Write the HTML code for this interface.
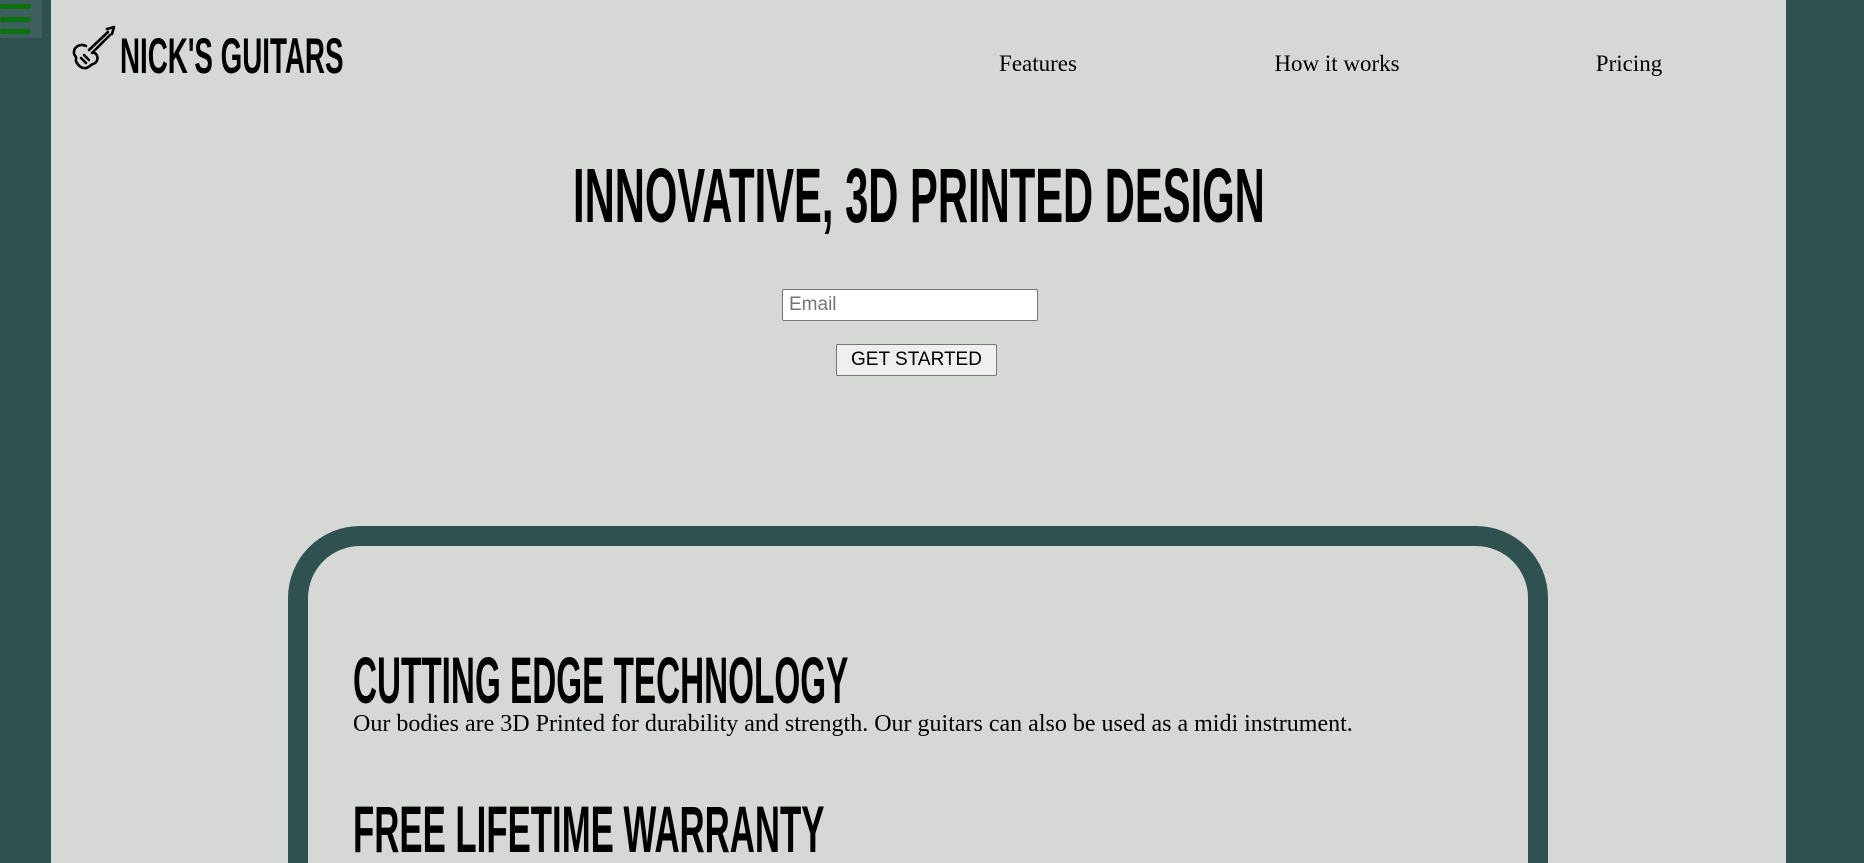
<!DOCTYPE html>
<html style="overflow:hidden;height:863px"><head><meta charset="utf-8"><style>
html,body{margin:0;padding:0}
body{width:1864px;height:863px;overflow:hidden;background:#2f5150;position:relative;font-family:"Liberation Serif",serif}
.wrap{position:absolute;left:0;top:0;width:1864px;height:863px;overflow:hidden}
.main{position:absolute;left:51px;top:0;width:1735px;height:863px;background:#d6d8d5}
.ham{position:absolute;left:0;top:0;width:42px;height:38px;background:#3f5f5e}
.ham i{position:absolute;left:0;width:31px;height:5px;border-radius:3px;background:#0a720a}
.cond{position:absolute;font-family:"Liberation Sans",sans-serif;font-weight:bold;color:#000;transform-origin:0 0;white-space:nowrap;line-height:1}
.nav{position:absolute;top:51px;font-size:23px;color:#000;transform:translateX(-50%);line-height:1.1}
.card{position:absolute;left:288px;top:526px;width:1220px;height:317px;border:20px solid #2f5150;border-bottom:0;border-radius:72px 72px 0 0;background:#d6d8d5}
</style></head><body><div class="wrap">
<div class="main"></div>
<div class="ham"><i style="top:4px"></i><i style="top:17px"></i><i style="top:29px"></i></div>
<svg style="position:absolute;left:71px;top:25px" width="46" height="46" viewBox="0 0 46 46" fill="none" stroke="#000" stroke-width="2.6" stroke-linejoin="round" stroke-linecap="round">
<path d="M15 21 C9 18 3 22 3 27 C2 30 6 31 5 34 C4 37 9 43 13 43 C17 44 19 40 22 39 C26 38 28 33 25 29 L22 27"/>
<path d="M18 25 L37 7 M21 28 L39 10"/>
<path d="M36 4 L43 2 L41 9"/>
<path d="M13 30 L18 35 M10 33 L15 38"/>
</svg>
<div class="card"></div>
<div class="cond" style="left:120px;top:31px;font-size:50px;transform:scaleX(0.555)">NICK'S GUITARS</div>
<div class="nav" style="left:1038px">Features</div>
<div class="nav" style="left:1337px">How it works</div>
<div class="nav" style="left:1629px">Pricing</div>
<div class="cond" style="left:573px;top:158px;font-size:77px;transform:scaleX(0.542)">INNOVATIVE, 3D PRINTED DESIGN</div>
<div style="position:absolute;left:782px;top:289px;width:256px;height:32px;box-sizing:border-box;border:1px solid #767676;border-radius:2px;background:#fff;font:19px 'Liberation Sans',sans-serif;color:#767676;padding:4px 6px">Email</div>
<div style="position:absolute;left:836px;top:344px;width:161px;height:32px;box-sizing:border-box;border:1px solid #767676;border-radius:2px;background:#efefef;font:19px 'Liberation Sans',sans-serif;color:#000;text-align:center;line-height:30px">GET STARTED</div>
<div class="cond" style="left:353px;top:647px;font-size:66px;transform:scaleX(0.504)">CUTTING EDGE TECHNOLOGY</div>
<div style="position:absolute;left:353px;top:711px;font-size:24px;color:#000;white-space:nowrap;line-height:1.1">Our bodies are 3D Printed for durability and strength. Our guitars can also be used as a midi instrument.</div>
<div class="cond" style="left:353px;top:797px;font-size:66px;line-height:0.99;transform:scaleX(0.527)">FREE LIFETIME WARRANTY</div>
</div></body></html>
